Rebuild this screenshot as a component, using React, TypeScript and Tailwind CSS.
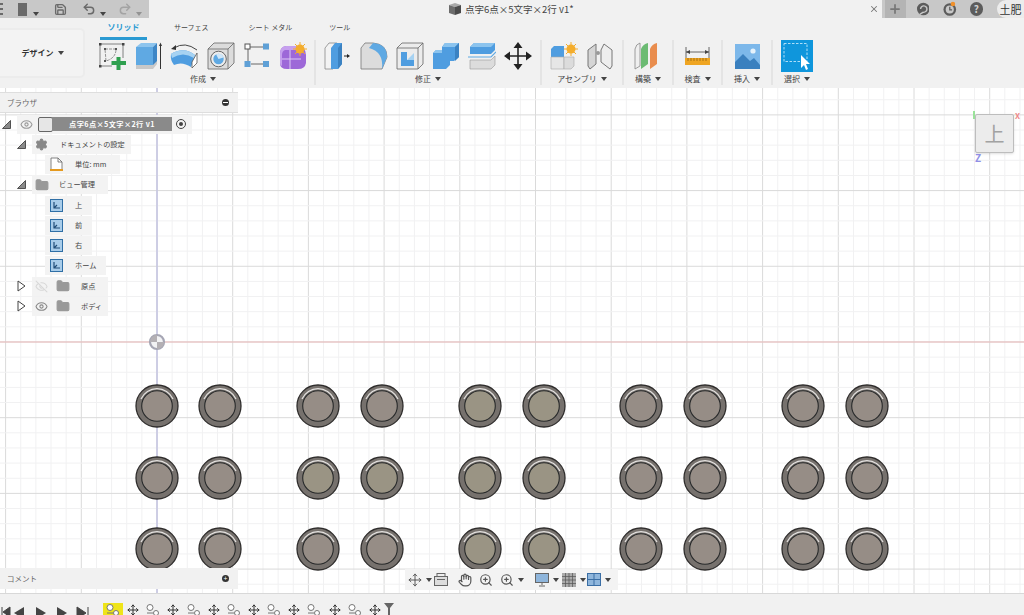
import type { ReactNode } from "react"
import { Eye, EyeOff, Hand, Move, Folder, X, Plus, Save, Undo2, Redo2, Settings, ZoomIn } from "lucide-react"

const caret = <span className="ml-[4px] inline-block h-0 w-0 border-x-[3px] border-t-[4px] border-x-transparent border-t-[#444]" />

function SketchIcon() {
  return (
    <svg width="28" height="28" viewBox="0 0 28 28">
      <path d="M1 2 H24 V16 M1 2 V24 H13" fill="none" stroke="#666" strokeWidth="0.8" />
      <path d="M6 7 H17 Q17 16 7 19 Z" fill="none" stroke="#888" strokeWidth="0.9" strokeDasharray="3 1" />
      <rect x="0" y="1" width="2.5" height="2.5" fill="#444" /><rect x="23" y="1" width="2.5" height="2.5" fill="#444" /><rect x="0" y="23" width="2.5" height="2.5" fill="#444" />
      <rect x="5" y="6" width="2" height="2" fill="#555" /><rect x="5" y="18" width="2" height="2" fill="#555" /><rect x="16" y="6" width="2" height="2" fill="#555" />
      <path d="M17.5 15 h4 v4 h5.5 v4 h-5.5 v5 h-4 v-5 h-5 v-4 h5 z" fill="#2fa04f" />
    </svg>
  )
}

function ExtrudeIcon() {
  return (
    <svg width="28" height="28" viewBox="0 0 28 28">
      <path d="M1 22 H18 L22 18 V22 L18 27 H1 Z" fill="#c8c8c8" />
      <path d="M1 5 H18 V23 H1 Z" fill="#5fa9e3" />
      <path d="M1 5 L6 1 H22 L18 5 Z" fill="#8cc4ee" />
      <path d="M18 5 L22 1 V19 L18 23 Z" fill="#3d86c6" />
      <path d="M25.5 27 V3" stroke="#333" strokeWidth="1" />
      <path d="M24 4 L25.5 0.5 L27 4 Z" fill="#333" />
    </svg>
  )
}

function RevolveIcon() {
  return (
    <svg width="30" height="28" viewBox="0 0 30 28">
      <path d="M1 12 Q14 4 25 13 L21 25 Q12 19 4 23 Q0 18 1 12 Z" fill="#4f9de0" />
      <path d="M1 12 Q14 4 25 13 L24 16 Q13 9 2 16 Z" fill="#a6d2f2" />
      <path d="M22 20 L27 11 V21 L22 26 Z" fill="#fff" stroke="#555" strokeWidth="0.8" />
      <path d="M4 6 Q15 -1 27 8" fill="none" stroke="#444" strokeWidth="1" />
      <path d="M1 7 L6 3 L6 8 Z" fill="#333" />
    </svg>
  )
}

function HoleIcon() {
  return (
    <svg width="28" height="28" viewBox="0 0 28 28">
      <path d="M1 7 L7 1 H27 V21 L21 27 H1 Z" fill="#dcdcdc" stroke="#666" strokeWidth="0.8" />
      <path d="M1 7 H21 V27 M21 7 L27 1" fill="none" stroke="#666" strokeWidth="0.8" />
      <circle cx="11.5" cy="17" r="7.8" fill="#ececec" stroke="#666" />
      <circle cx="11.5" cy="17" r="5.2" fill="#5fa9e3" />
      <path d="M11.5 17 L9 12.3 A5.2 5.2 0 0 1 16.5 15.5 Z" fill="#cfe6f8" />
    </svg>
  )
}

function NodesIcon() {
  return (
    <svg width="26" height="26" viewBox="0 0 26 26">
      <path d="M6 4 H20 M4 6 V20 M7 21 H20" stroke="#666" strokeWidth="1" />
      <rect x="1" y="1" width="5" height="5" fill="#fff" stroke="#555" />
      <rect x="19" y="0.5" width="6" height="6" fill="#5fa0d6" />
      <rect x="0.5" y="18" width="6" height="6" fill="#5fa0d6" />
      <rect x="19" y="18" width="6" height="6" fill="#5fa0d6" />
    </svg>
  )
}

function FormIcon() {
  return (
    <svg width="28" height="28" viewBox="0 0 28 28">
      <path d="M1 11 Q1 5 7 4 H19 Q27 5 27 13 V21 Q26 27 19 27 H8 Q1 27 1 21 Z" fill="#9d68d8" />
      <path d="M1 11 Q1 5 7 4 H19 L17 8 H6 Q3 9 3 13 V24 Q1 23 1 21 Z" fill="#c6a0ee" />
      <path d="M11 8 V27 M3 17 H22" stroke="#dcc8f4" strokeWidth="1" />
      <circle cx="21" cy="7" r="4.5" fill="#f4ad2c" />
      <path d="M21 0 V14 M14 7 H28 M16 2 L26 12 M26 2 L16 12" stroke="#f4ad2c" strokeWidth="1" />
    </svg>
  )
}

function PressPullIcon() {
  return (
    <svg width="28" height="28" viewBox="0 0 28 28">
      <path d="M1 6 L5 1 H13 V23 L9 27 H1 Z" fill="#f3f3f3" stroke="#888" strokeWidth="0.8" />
      <path d="M7 6 L11 1 H18 V22 L14 27 H7 Z" fill="#4f9de0" />
      <path d="M14 6 L18 1 V22 L14 27 Z" fill="#3b82c2" />
      <path d="M18 14 H23" stroke="#eee" strokeWidth="1" />
      <path d="M20 14 H24" stroke="#222" strokeWidth="1" />
      <path d="M23 12 L26 14 L23 16 Z" fill="#222" />
    </svg>
  )
}

function FilletIcon() {
  return (
    <svg width="28" height="28" viewBox="0 0 28 28">
      <path d="M1 6 L5 1 H13 Q27 2 27 15 L22 27 H1 Z" fill="#dcdcdc" stroke="#777" strokeWidth="0.8" />
      <path d="M13 1 Q27 2 27 15 L22 27 Q24 10 9 6 Z" fill="#5fa9e3" />
    </svg>
  )
}

function ShellIcon() {
  return (
    <svg width="28" height="28" viewBox="0 0 28 28">
      <path d="M1 6 L6 1 H27 V22 L22 27 H1 Z" fill="#ececec" stroke="#666" strokeWidth="0.8" />
      <path d="M1 6 H22 V27 M22 6 L27 1" fill="none" stroke="#666" strokeWidth="0.8" />
      <path d="M5 10 H11 V18 H18 V24 H5 Z" fill="#4f9de0" />
      <path d="M11 18 L18 11 V18 Z" fill="#a6d2f2" />
    </svg>
  )
}

function CombineIcon() {
  return (
    <svg width="28" height="28" viewBox="0 0 28 28">
      <path d="M1 11 L4 8 H10 V5 L13 1 H27 V15 L22 19 H18 V23 L14 27 H1 Z" fill="#4f9de0" />
      <path d="M10 5 L13 1 H27 L23 5 Z M1 11 L4 8 H10 L10 11 Z" fill="#8cc4ee" />
      <path d="M23 5 L27 1 V15 L23 19 Z" fill="#3b82c2" />
    </svg>
  )
}

function OffsetIcon() {
  return (
    <svg width="28" height="28" viewBox="0 0 28 28">
      <path d="M2 5 L6 1 H27 V8 L23 12 H2 Z" fill="#4f9de0" />
      <path d="M2 5 L6 1 H27 L23 5 Z" fill="#8cc4ee" />
      <path d="M0 15 H23 L28 10" stroke="#5fa9e3" strokeWidth="1.2" fill="none" />
      <path d="M2 18 H23 L27 14 V23 L23 27 H2 Z" fill="#dcdcdc" stroke="#999" strokeWidth="0.6" />
    </svg>
  )
}

function MoveIcon() {
  return (
    <svg width="28" height="28" viewBox="0 0 28 28">
      <path d="M14 3 V25 M3 14 H25" stroke="#222" strokeWidth="1.6" />
      <path d="M14 0 L18.5 6 H9.5 Z M14 28 L18.5 22 H9.5 Z M0 14 L6 9.5 V18.5 Z M28 14 L22 9.5 V18.5 Z" fill="#222" />
    </svg>
  )
}

function AssembleIcon() {
  return (
    <svg width="28" height="28" viewBox="0 0 28 28">
      <path d="M1 7 L4 4 H14 V15 H1 Z" fill="#4f9de0" />
      <path d="M1 15 H14 V27 H1 Z" fill="#e6e6e6" stroke="#aaa" strokeWidth="0.6" />
      <path d="M14 15 H24 L24 24 L21 27 H14 Z" fill="#dcdcdc" stroke="#aaa" strokeWidth="0.6" />
      <circle cx="21" cy="7" r="4.5" fill="#f4ad2c" />
      <path d="M21 0 V14 M14 7 H28 M16 2 L26 12 M26 2 L16 12" stroke="#f4ad2c" strokeWidth="1" />
    </svg>
  )
}

function JointIcon() {
  return (
    <svg width="28" height="28" viewBox="0 0 28 28">
      <path d="M2 8 L10 2 V22 L4 27 L2 24 Z" fill="#d5d5d5" stroke="#777" strokeWidth="1" />
      <path d="M26 8 L18 2 L15 8 V20 L24 27 L26 24 Z" fill="#eee" stroke="#777" strokeWidth="1" />
      <circle cx="12" cy="11" r="2" fill="#999" />
    </svg>
  )
}

function PlaneIcon() {
  return (
    <svg width="28" height="28" viewBox="0 0 28 28">
      <path d="M1 7 Q2 2 6 1 V24 L1 27 Z" fill="#efefef" stroke="#888" strokeWidth="0.8" />
      <path d="M7 7 Q9 2 14 1 V22 L7 27 Z" fill="#6cbb73" />
      <path d="M16 7 Q18 2 23 1 V22 L16 27 Z" fill="#e98d4e" />
    </svg>
  )
}

function MeasureIcon() {
  return (
    <svg width="26" height="20" viewBox="0 0 26 20">
      <path d="M1 1 V12 M24 1 V12 M1 6 H24" stroke="#444" strokeWidth="0.8" />
      <path d="M1 6 L5 4 V8 Z M24 6 L20 4 V8 Z" fill="#444" />
      <rect x="0" y="12" width="25" height="7" fill="#efa522" />
      <path d="M3 12 V15 M6 12 V15 M9 12 V15 M12 12 V15 M15 12 V15 M18 12 V15 M21 12 V15" stroke="#8a5c0c" strokeWidth="0.7" />
    </svg>
  )
}

function ImageIcon() {
  return (
    <svg width="25" height="25" viewBox="0 0 25 25">
      <rect width="25" height="25" fill="#7db8ea" />
      <circle cx="18" cy="7" r="2.6" fill="#e6f2fb" />
      <path d="M0 23 V18 L8 10 L15 17 L19 14 L25 21 V25 H0 Z" fill="#3a80bf" />
    </svg>
  )
}

function SelectIcon() {
  return (
    <svg width="32" height="32" viewBox="0 0 32 32">
      <rect width="32" height="32" fill="#0f96dc" />
      <rect x="3" y="3.5" width="23" height="18" fill="none" stroke="#bfe6fa" strokeWidth="0.9" strokeDasharray="2.5 1.5" />
      <path d="M20 15 V28 L23 25 L25 30 L27 29 L25 24 L29 24 Z" fill="#fff" />
    </svg>
  )
}

function IconCell({ children }: { children: ReactNode }) {
  return <div className="flex h-[32px] w-[36px] items-center justify-center">{children}</div>
}

function RibbonGroup({ label, width, border = true, icons }: { label: string; width: string; border?: boolean; icons: ReactNode[] }) {
  return (
    <div className={`flex h-full flex-col items-center ${width} ${border ? "border-r-2 border-[#e4e4e4]" : ""}`}>
      <div className="flex">
        {icons.map((icon, i) => (
          <IconCell key={i}>{icon}</IconCell>
        ))}
      </div>
      <div className="mt-[1px] flex items-center text-[8px] leading-[12px] text-[#444]">
        {label}
        {caret}
      </div>
    </div>
  )
}

function TitleBar() {
  return (
    <div className="relative flex h-[18px] items-center justify-between bg-[#f1f1f1]">
      <div className="flex h-full w-[149px] items-center bg-[#c8c8c8] text-[#6a6a6a]">
        <div className="flex h-[12px] w-[3px] flex-col justify-between">
          <div className="h-[2px] bg-[#6a6a6a]" />
          <div className="h-[2px] bg-[#6a6a6a]" />
          <div className="h-[2px] bg-[#6a6a6a]" />
        </div>
        <div className="ml-[15px] h-[13px] w-[9px] bg-[#6a6a6a]" />
        <span className="ml-[2px]">{caret}</span>
        <Save className="ml-[15px] h-[13px] w-[13px]" strokeWidth={2.5} />
        <Undo2 className="ml-[15px] h-[14px] w-[14px]" strokeWidth={2.5} />
        <span>{caret}</span>
        <Redo2 className="ml-[12px] h-[14px] w-[14px] text-[#a3a3a3]" strokeWidth={2.5} />
        <span className="opacity-40">{caret}</span>
      </div>
      <div className="absolute left-[448px] flex items-center text-[9.5px] text-[#444]">
        <svg width="14" height="14" viewBox="0 0 14 14" className="mr-[3px]">
          <path d="M1 3 L7 1 L13 3 L7 5 Z" fill="#a8a8a8" />
          <path d="M1 3 L7 5 V13 L1 11 Z" fill="#6c6c6c" />
          <path d="M13 3 L7 5 V13 L13 11 Z" fill="#4a4a4a" />
        </svg>
        点字6点×5文字×2行 v1*
      </div>
      <div className="flex h-full items-center">
        <X className="mr-[3px] h-[10px] w-[10px] text-[#777]" strokeWidth={2.5} />
        <div className="flex h-full w-[142px] items-center bg-[#c8c8c8]">
          <div className="ml-[3px] flex h-full w-[23px] items-center justify-center bg-[#b4b4b4]">
            <Plus className="h-[14px] w-[14px] text-[#777]" strokeWidth={3} />
          </div>
          <svg width="14" height="14" viewBox="0 0 14 14" className="ml-[11px]">
            <circle cx="7" cy="7" r="7" fill="#5c5c5c" />
            <path d="M4 7 A3.5 3.5 0 1 1 7 10.5 M7 10.5 L3 13" stroke="#c8c8c8" strokeWidth="1.6" fill="none" />
          </svg>
          <svg width="15" height="16" viewBox="0 0 15 16" className="ml-[14px]">
            <circle cx="7.5" cy="8.5" r="7" fill="#5c5c5c" />
            <circle cx="7.5" cy="8.5" r="4.5" fill="#c8c8c8" />
            <path d="M7.5 5.5 V9 H10" stroke="#5c5c5c" strokeWidth="1.4" fill="none" />
            <circle cx="11" cy="2.5" r="2.5" fill="#f0902a" />
          </svg>
          <div className="ml-[13px] flex h-[14px] w-[14px] items-center justify-center rounded-full bg-[#5c5c5c] text-[10px] leading-none font-bold text-[#d0d0d0]">?</div>
          <div className="ml-[14px] flex h-[18px] w-[30px] items-center rounded-l-full bg-[#ececec] pl-[3px] text-[11px] whitespace-nowrap text-[#333]">土肥</div>
        </div>
      </div>
    </div>
  )
}

function Ribbon() {
  return (
    <div className="flex h-[70px] bg-[#f1f1f1]">
      <div className="w-[95px] shrink-0 pt-[10px]">
        <div className="-ml-[5px] flex h-[50px] w-[90px] items-center justify-center rounded-[5px] border-2 border-[#ececec] bg-[#f3f3f3] pl-[5px] text-[8px] font-bold text-[#333]">
          デザイン{caret}
        </div>
      </div>
      <div className="flex flex-col">
        <div className="flex h-[22px] items-center text-[7px] text-[#444]">
          <div className="relative ml-[5px] flex h-[21px] w-[47px] items-center justify-center pb-[5px] text-[8px] font-bold text-[#2b9ad2]">
            ソリッド
            <div className="absolute right-0 bottom-0 left-0 h-[3px] bg-[#2b9ad2]" />
          </div>
          <span className="mb-[4px] ml-[27px]">サーフェス</span>
          <span className="mb-[4px] ml-[40px]">シート メタル</span>
          <span className="mb-[4px] ml-[37px]">ツール</span>
        </div>
        <div className="flex h-[48px] pb-[3px]">
          <RibbonGroup
            label="作成"
            width="w-[221px] pr-[3px]"
            icons={[<SketchIcon />, <ExtrudeIcon />, <RevolveIcon />, <HoleIcon />, <NodesIcon />, <FormIcon />]}
          />
          <RibbonGroup
            label="修正"
            width="w-[226px]"
            icons={[<PressPullIcon />, <FilletIcon />, <ShellIcon />, <CombineIcon />, <OffsetIcon />, <MoveIcon />]}
          />
          <RibbonGroup label="アセンブリ" width="w-[82px]" icons={[<AssembleIcon />, <JointIcon />]} />
          <RibbonGroup label="構築" width="w-[50px]" icons={[<PlaneIcon />]} />
          <RibbonGroup label="検査" width="w-[49px]" icons={[<MeasureIcon />]} />
          <RibbonGroup label="挿入" width="w-[50px]" icons={[<ImageIcon />]} />
          <RibbonGroup label="選択" width="w-[48px]" border={false} icons={[<SelectIcon />]} />
        </div>
      </div>
    </div>
  )
}

const minorX = Array.from({ length: 70 }, (_, i) => 5.6 + i * 15.14)
const minorY = Array.from({ length: 36 }, (_, i) => 84.6 + i * 15.14)
const dotXs = [157, 220, 318, 382, 480, 544, 641, 705, 803, 867]
const dotYs = [406, 478, 549]

// viewport: grid, axes and the model, in page coordinates
function Viewport() {
  return (
    <svg className="absolute inset-0" width="1024" height="505" viewBox="0 88 1024 505">
      <rect x="0" y="88" width="1024" height="505" fill="#ffffff" />
      {minorX.map((x, i) => (
        <line key={i} x1={x} x2={x} y1="88" y2="593" stroke={i % 5 === 0 ? "#dadada" : "#f1f1f2"} strokeWidth="1" />
      ))}
      {minorY.map((y, i) => (
        <line key={i} y1={y} y2={y} x1="0" x2="1024" stroke={i % 5 === 2 ? "#dadada" : "#f1f1f2"} strokeWidth="1" />
      ))}
      <line x1="0" x2="1024" y1="342" y2="342" stroke="#ecb9b9" strokeWidth="1.2" />
      <line x1="157" x2="157" y1="88" y2="593" stroke="#c6c6e2" strokeWidth="1.6" />
      <circle cx="157" cy="342" r="7" fill="#f2f2f4" stroke="#a6a6b4" strokeWidth="2.2" />
      <path d="M157 342 V335 A7 7 0 0 0 150 342 Z M157 342 V349 A7 7 0 0 0 164 342 Z" fill="#b4b0b4" />
      {dotYs.map((y) =>
        dotXs.map((x) => {
          const olive = (x > 460 && x < 560) || (x > 300 && x < 400 && y === 478)
          return (
            <g key={`${x}-${y}`}>
              <circle cx={x} cy={y} r="21" fill="#76716d" stroke="#2f2d2c" strokeWidth="1.3" />
              <path d={`M${x - 16} ${y - 7} A17.5 17.5 0 0 1 ${x + 16} ${y - 7}`} fill="none" stroke="#e4e2e0" strokeWidth="1.2" />
              <circle cx={x} cy={y} r="15.3" fill={olive ? "#9a9484" : "#968d86"} stroke="#27292a" strokeWidth="1.1" />
            </g>
          )
        })
      )}
    </svg>
  )
}

function ViewCube() {
  return (
    <div className="absolute top-[26px] left-[975px] h-[39px] w-[39px] rounded-[2px] border border-[#bdbdbd] bg-[#ececec] shadow-sm">
      <div className="flex h-full items-center justify-center text-[20px] leading-none text-[#a2a2a2]">上</div>
      <span className="absolute -top-[4px] -left-[3px] h-[8px] w-[2px] bg-[#9be39b]" />
      <span className="absolute -top-[3px] -right-[7px] text-[8px] leading-none font-bold text-[#e88]">X</span>
      <span className="absolute -bottom-[11px] -left-[1px] text-[10px] leading-none font-bold text-[#8f8fe6]">Z</span>
    </div>
  )
}

function Triangle({ open }: { open: boolean }) {
  if (open) {
    return (
      <svg width="9" height="9" viewBox="0 0 9 9">
        <path d="M8.5 0.5 V8.5 H0.5 Z" fill="#8a8a8a" stroke="#333" strokeWidth="0.8" />
      </svg>
    )
  }
  return (
    <svg width="9" height="12" viewBox="0 0 9 12">
      <path d="M1 1 L8 6 L1 11 Z" fill="#fff" stroke="#444" strokeWidth="1" />
    </svg>
  )
}

function ViewBoxIcon() {
  return (
    <div className="flex h-[13px] w-[13px] items-center justify-center border border-[#2f6fa6] bg-[#a9cdea]">
      <svg width="9" height="9" viewBox="0 0 9 9">
        <path d="M2 1 V7 H8 M2 7 L5 4" fill="none" stroke="#234e78" strokeWidth="1.2" />
      </svg>
    </div>
  )
}

function TreeRow({ indent, tri, chip, children }: { indent: string; tri?: boolean; chip: string; children: ReactNode }) {
  return (
    <div className={`flex h-[20.25px] items-center ${indent}`}>
      {tri !== undefined && (
        <div className="flex w-[15px] items-center">
          <Triangle open={tri} />
        </div>
      )}
      <div className={`flex h-[19px] items-center bg-[#f3f3f3] text-[7.2px] text-[#444] ${chip}`}>{children}</div>
    </div>
  )
}

function BrowserPanel() {
  const views = ["上", "前", "右", "ホーム"]
  return (
    <div className="absolute top-[4px] left-0 w-[238px]">
      <div className="flex h-[21px] items-center justify-between border-y border-[#dedede] bg-[#f1f1f1] pr-[9px] pl-[7px] text-[7.5px] text-[#666]">
        ブラウザ
        <div className="flex h-[7px] w-[7px] items-center justify-center rounded-full bg-[#333]">
          <div className="h-[1px] w-[5px] bg-white" />
        </div>
      </div>
      <div className="pt-[1px]">
        <TreeRow indent="pl-[2px]" tri chip="w-[175px] pl-[3px]">
          <Eye className="h-[13px] w-[13px] text-[#999]" />
          <div className="ml-[5px] h-[15px] w-[15px] rounded-[2px] border border-[#666] bg-[#e6e6e6]" />
          <div className="-ml-[1px] flex h-[14px] w-[120px] items-center justify-center bg-[#8a8a8a] text-[7.2px] font-bold tracking-[0.4px] whitespace-nowrap text-white">
            点字6点×5文字×2行 v1
          </div>
          <div className="ml-[4px] flex h-[10px] w-[10px] items-center justify-center rounded-full border border-[#444]">
            <div className="h-[4px] w-[4px] rounded-full bg-[#444]" />
          </div>
        </TreeRow>
        <TreeRow indent="pl-[17px]" tri chip="w-[99px] pl-[3px]">
          <Settings className="h-[13px] w-[13px] fill-[#888] text-[#888]" />
          <span className="ml-[12px] whitespace-nowrap">ドキュメントの設定</span>
        </TreeRow>
        <TreeRow indent="pl-[45px]" chip="w-[75px] pl-[5px]">
          <svg width="13" height="15" viewBox="0 0 13 15">
            <path d="M1 13 V1 H8 L12 5 V13" fill="#fff" stroke="#666" strokeWidth="0.8" />
            <path d="M8 1 V5 H12" fill="none" stroke="#666" strokeWidth="0.8" />
            <rect x="0" y="12" width="13" height="2" fill="#e59a1f" />
          </svg>
          <span className="ml-[12px] whitespace-nowrap">単位: mm</span>
        </TreeRow>
        <TreeRow indent="pl-[17px]" tri chip="w-[76px] pl-[3px]">
          <Folder className="h-[14px] w-[14px] fill-[#999] text-[#999]" />
          <span className="ml-[10px] whitespace-nowrap">ビュー管理</span>
        </TreeRow>
        {views.map((v) => (
          <TreeRow key={v} indent="pl-[45px]" chip={v === "ホーム" ? "w-[61px] pl-[5px]" : "w-[47px] pl-[5px]"}>
            <ViewBoxIcon />
            <span className="ml-[12px] whitespace-nowrap">{v}</span>
          </TreeRow>
        ))}
        <TreeRow indent="pl-[17px]" tri={false} chip="w-[76px] pl-[3px]">
          <EyeOff className="h-[13px] w-[13px] text-[#d8d8d8]" />
          <Folder className="ml-[8px] h-[14px] w-[14px] fill-[#999] text-[#999]" />
          <span className="ml-[11px] whitespace-nowrap">原点</span>
        </TreeRow>
        <TreeRow indent="pl-[17px]" tri={false} chip="w-[76px] pl-[3px]">
          <Eye className="h-[13px] w-[13px] text-[#888]" />
          <Folder className="ml-[8px] h-[14px] w-[14px] fill-[#999] text-[#999]" />
          <span className="ml-[11px] whitespace-nowrap">ボディ</span>
        </TreeRow>
      </div>
    </div>
  )
}

function CommentPanel() {
  return (
    <div className="absolute bottom-[4px] left-0 flex h-[21px] w-[238px] items-center justify-between bg-[#f1f1f1] pr-[9px] pl-[7px] text-[7.5px] text-[#666]">
      コメント
      <div className="flex h-[7px] w-[7px] items-center justify-center rounded-full bg-[#333] text-[7px] leading-none text-white">+</div>
    </div>
  )
}

function NavBar() {
  return (
    <div className="absolute bottom-[3px] left-[405px] flex h-[21px] w-[213px] items-center bg-[#f3f3f3] pl-[3px] text-[#666]">
      <Move className="h-[14px] w-[14px] text-[#444]" strokeWidth={1.5} />
      {caret}
      <svg width="14" height="13" viewBox="0 0 14 13" className="ml-[2px]">
        <rect x="0.5" y="3.5" width="13" height="9" fill="#ddd" stroke="#666" />
        <rect x="3" y="0.5" width="8" height="3" fill="#eee" stroke="#666" />
        <path d="M3 6.5 H11" stroke="#666" />
      </svg>
      <Hand className="ml-[10px] h-[14px] w-[14px] text-[#555]" />
      <ZoomIn className="ml-[7px] h-[14px] w-[14px] text-[#555]" />
      <ZoomIn className="ml-[7px] h-[14px] w-[14px] text-[#555]" />
      {caret}
      <svg width="14" height="14" viewBox="0 0 14 14" className="ml-[11px]">
        <rect x="0.5" y="0.5" width="13" height="9" fill="#8fb6dc" stroke="#666" />
        <path d="M7 10 V12 M4 13 H10" stroke="#666" />
      </svg>
      {caret}
      <svg width="14" height="14" viewBox="0 0 14 14" className="ml-[3px]">
        <rect width="14" height="14" fill="#aaa" />
        <path d="M3.5 0 V14 M7 0 V14 M10.5 0 V14 M0 3.5 H14 M0 7 H14 M0 10.5 H14" stroke="#555" strokeWidth="0.7" />
      </svg>
      {caret}
      <svg width="14" height="13" viewBox="0 0 14 13" className="ml-[1px]">
        <rect x="0.5" y="0.5" width="13" height="12" fill="#8fb6dc" stroke="#3a6ea5" />
        <path d="M7 0 V13 M0 6.5 H14" stroke="#3a6ea5" />
      </svg>
      {caret}
    </div>
  )
}

function SketchStep() {
  return (
    <svg width="14" height="12" viewBox="0 0 14 12">
      <circle cx="4" cy="3.5" r="3" fill="#fff" stroke="#777" />
      <circle cx="10" cy="9" r="2.5" fill="#fff" stroke="#777" />
      <path d="M1 9 H7" stroke="#777" />
    </svg>
  )
}

function Timeline() {
  const steps = Array.from({ length: 14 }, (_, i) => i)
  return (
    <div className="flex h-[22px] items-start overflow-hidden border-t border-[#d8d8d8] bg-[#f1f1f1]">
      <div className="flex w-[103px] items-center pt-[11px] pl-[1px] text-[#555]">
        {/* transport controls, cropped by the bottom of the window */}
        <svg width="90" height="12" viewBox="0 0 90 12">
          <path d="M1 2 V12 M9 2 L2 7 L9 12 Z" stroke="#444" fill="#444" />
          <path d="M23 2 L13 8 L23 14 Z" fill="#444" />
          <path d="M35 2 L45 8 L35 14 Z" fill="#444" />
          <path d="M56 2 L66 8 L56 14 Z" fill="#444" />
          <path d="M76 2 L85 8 L76 14 Z M87 2 V14" stroke="#444" fill="#444" />
        </svg>
      </div>
      <div className="flex pt-[9px]">
        {steps.map((i) =>
          i % 2 === 0 ? (
            <div key={i} className={`flex h-[14px] w-[20.15px] items-center justify-center ${i === 0 ? "bg-[#efe419]" : ""}`}>
              <SketchStep />
            </div>
          ) : (
            <div key={i} className="flex h-[14px] w-[20.15px] items-center justify-center">
              <Move className="h-[12px] w-[12px] text-[#333]" strokeWidth={2} />
            </div>
          )
        )}
      </div>
      <div className="-ml-[1px] pt-[9px]">
        <svg width="10" height="13" viewBox="0 0 10 13">
          <path d="M0 0 H10 L6 5 V13 H4 V5 Z" fill="#666" />
        </svg>
      </div>
    </div>
  )
}

export default function App() {
  return (
    <div className="flex h-[615px] w-[1024px] flex-col overflow-hidden bg-white font-['Noto_Sans_CJK_JP','Noto_Sans',sans-serif]">
      <TitleBar />
      <Ribbon />
      <div className="relative h-[505px] overflow-hidden">
        <Viewport />
        <ViewCube />
        <BrowserPanel />
        <CommentPanel />
        <NavBar />
      </div>
      <Timeline />
    </div>
  )
}
